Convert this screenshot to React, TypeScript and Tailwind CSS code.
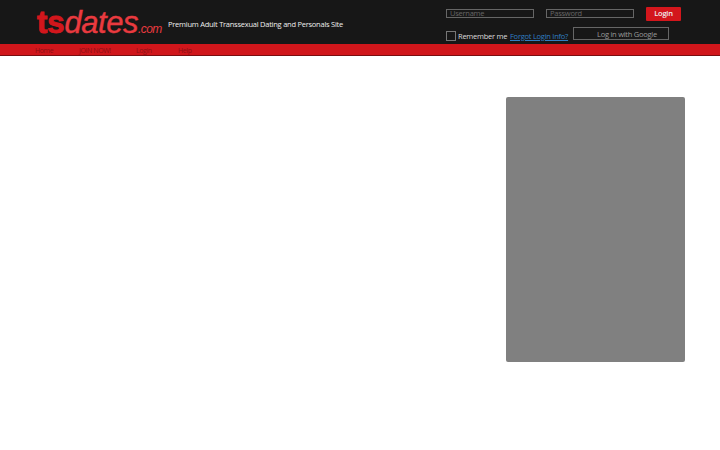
export default function App() {
  const sans = "font-['Open_Sans',sans-serif]";
  return (
    <div className={`${sans} w-full min-h-[450px] bg-white`}>
      <header className="h-11 bg-[#171717] flex justify-between">
        <div className="flex items-center pl-[37px]">
          <div className="flex items-baseline font-['Liberation_Sans',sans-serif] w-[126px] mt-[1px] leading-none whitespace-nowrap">
            <span className="text-[31px] font-bold text-[#d3161c] [-webkit-text-stroke:1px_#d3161c]">ts</span>
            <span className="text-[31px] italic text-[#ea3a3f] tracking-[-0.5px] [-webkit-text-stroke:0.4px_#ea3a3f]">dates</span>
            <span className="text-[12px] italic text-[#ea3a3f] tracking-[-0.55px]">.com</span>
          </div>
          <p className="ml-[5px] text-[7.5px] tracking-[-0.245px] leading-none text-[#eeeeee] mt-[5px] whitespace-nowrap">Premium Adult Transsexual Dating and Personals Site</p>
        </div>
        <div className="w-[274px] pt-[7px]">
          <div className="flex items-start h-[14px]">
            <div className="mt-[2px] w-[88px] h-[9px] border border-[#666666] text-[7.5px] tracking-[-0.25px] leading-[7px] pl-[3px] text-[#666666]">Username</div>
            <div className="mt-[2px] ml-3 w-[88px] h-[9px] border border-[#666666] text-[7.5px] tracking-[-0.25px] leading-[7px] pl-[3px] text-[#666666]">Password</div>
            <button className="ml-3 w-[35px] h-[14px] bg-[#d3161c] rounded-[1px] text-[7.5px] tracking-[-0.2px] leading-none font-semibold text-[#eeeeee]">Login</button>
          </div>
          <div className="flex items-start mt-[6px] h-[13px]">
            <div className="w-[10px] h-[10px] border border-[#777777] mt-[4px]" />
            <span className="ml-[2px] w-[48px] text-[7.5px] tracking-[-0.25px] leading-none text-[#dddddd] mt-[6px] whitespace-nowrap">Remember me</span>
            <a className="ml-[4px] w-[59px] text-[7.5px] tracking-[-0.25px] leading-none text-[#2f7fc4] underline mt-[6px] whitespace-nowrap">Forgot Login Info?</a>
            <div className="ml-[4px] w-24 h-[13px] border border-[#666666] text-[7.5px] tracking-[-0.25px] leading-[12px] pl-[23px] text-[#999999] whitespace-nowrap">Log in with Google</div>
          </div>
        </div>
      </header>
      <nav className="h-3 bg-[#d0161b] border-b border-[#7a0d10] flex items-center pl-[35px] pt-[2px] text-[7px] tracking-[-0.4px] leading-none text-[#8c1014]">
        <span className="w-[44px]">Home</span>
        <span className="w-[57px]">JOIN NOW!</span>
        <span className="w-[42px]">Login</span>
        <span>Help</span>
      </nav>
      <main className="flex justify-end pr-[35px] pt-[41px]">
        <div className="w-[179px] h-[265px] bg-[#808080] rounded-[2px]" />
      </main>
    </div>
  );
}
